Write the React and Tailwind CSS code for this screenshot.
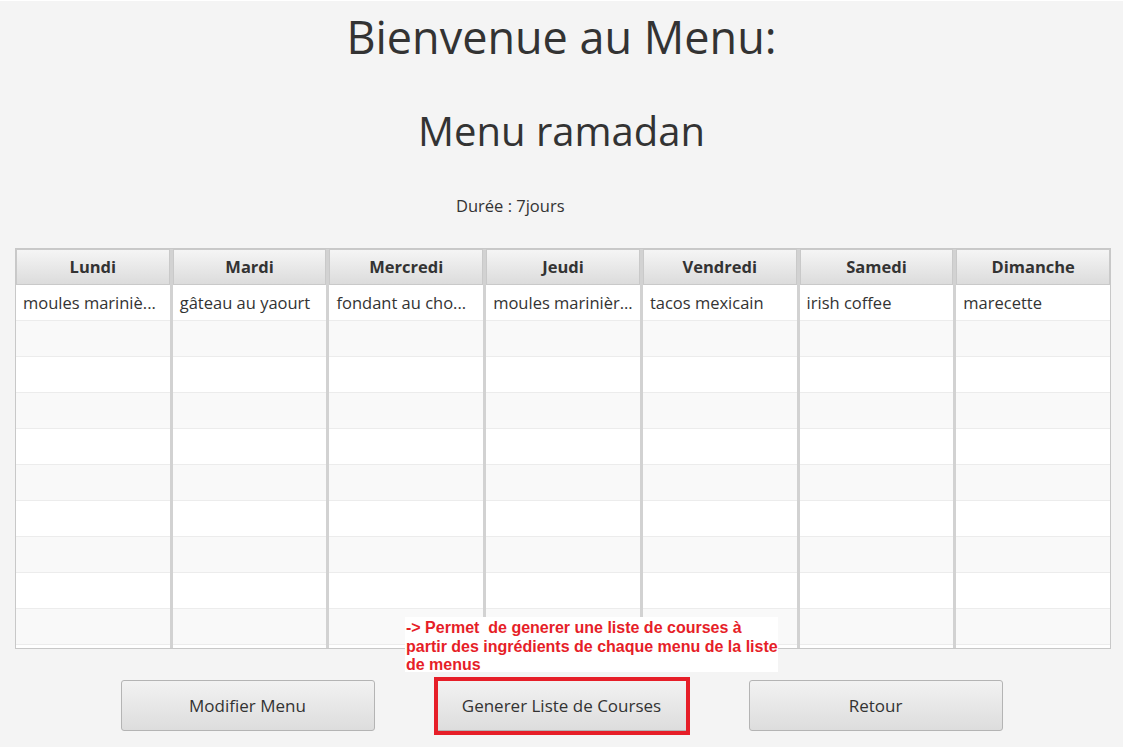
const days = ['Lundi', 'Mardi', 'Mercredi', 'Jeudi', 'Vendredi', 'Samedi', 'Dimanche'];
const dishes = ['moules mariniè...', 'gâteau au yaourt', 'fondant au cho...', 'moules marinièr...', 'tacos mexicain', 'irish coffee', 'marecette'];
const rows = Array.from({ length: 10 }, (_, i) => i);

export default function App() {
  return (
    <div className="relative h-[747px] w-[1123px] overflow-hidden bg-[#f4f4f4] text-[#333333]" style={{ fontFamily: '"Open Sans", "Noto Sans", sans-serif' }}>
      <div className="h-px bg-white" />
      <h1 className="mt-[6px] text-center text-[45px] leading-[60px] font-normal">Bienvenue au Menu:</h1>
      <h2 className="mt-[34px] text-center text-[40px] leading-[60px] font-normal">Menu ramadan</h2>
      <p className="mt-[35px] ml-[456px] text-[16.5px] leading-[20px]">Durée : 7jours</p>

      <div className="mt-[32px] ml-[15px] flex h-[401px] w-[1096px] border border-[#c8c8c8] bg-white">
        {days.map((day, c) => (
          <div key={day} className={`flex min-w-0 flex-1 flex-col ${c < 6 ? 'border-r-[3px] border-[#d2d2d2]' : ''}`}>
            <div className="flex h-[36px] shrink-0 items-center justify-center border border-[#c9c9c9] bg-gradient-to-b from-[#f5f5f5] to-[#dcdcdc] pt-px text-[16.5px] font-bold">
              {day}
            </div>
            {rows.map(r => (
              <div key={r} className={`flex h-[36px] shrink-0 items-center overflow-hidden whitespace-nowrap border-b border-[#ececec] px-[7px] pt-px text-[16.5px] ${r % 2 ? 'bg-[#f9f9f9]' : 'bg-white'}`}>
                {r === 0 ? dishes[c] : ''}
              </div>
            ))}
          </div>
        ))}
      </div>

      <div className="mt-[31px] flex justify-center gap-[60px]">
        <Button label="Modifier Menu" />
        <div className="relative">
          <Button label="Generer Liste de Courses" />
          <div className="pointer-events-none absolute -top-[3px] -left-[1px] -right-[1px] -bottom-[4px] border-[4px] border-[#e61e28]" />
        </div>
        <Button label="Retour" />
      </div>

      <div className="absolute left-[405px] top-[617px] h-[55px] w-[373px] whitespace-nowrap bg-white pl-[1px] pt-[2px] text-[16px] font-bold leading-[18.5px] text-[#e61e28]" style={{ fontFamily: '"Liberation Sans", Arial, sans-serif' }}>
        -&gt; Permet&nbsp; de generer une liste de courses à<br />
        partir des ingrédients de chaque menu de la liste<br />
        de menus
      </div>
    </div>
  );
}

function Button({ label }) {
  return (
    <button className="h-[51px] w-[254px] rounded-[3px] border border-[#b4b4b4] bg-gradient-to-b from-[#f2f2f2] to-[#dddddd] text-[17px] text-[#333333]">
      {label}
    </button>
  );
}
